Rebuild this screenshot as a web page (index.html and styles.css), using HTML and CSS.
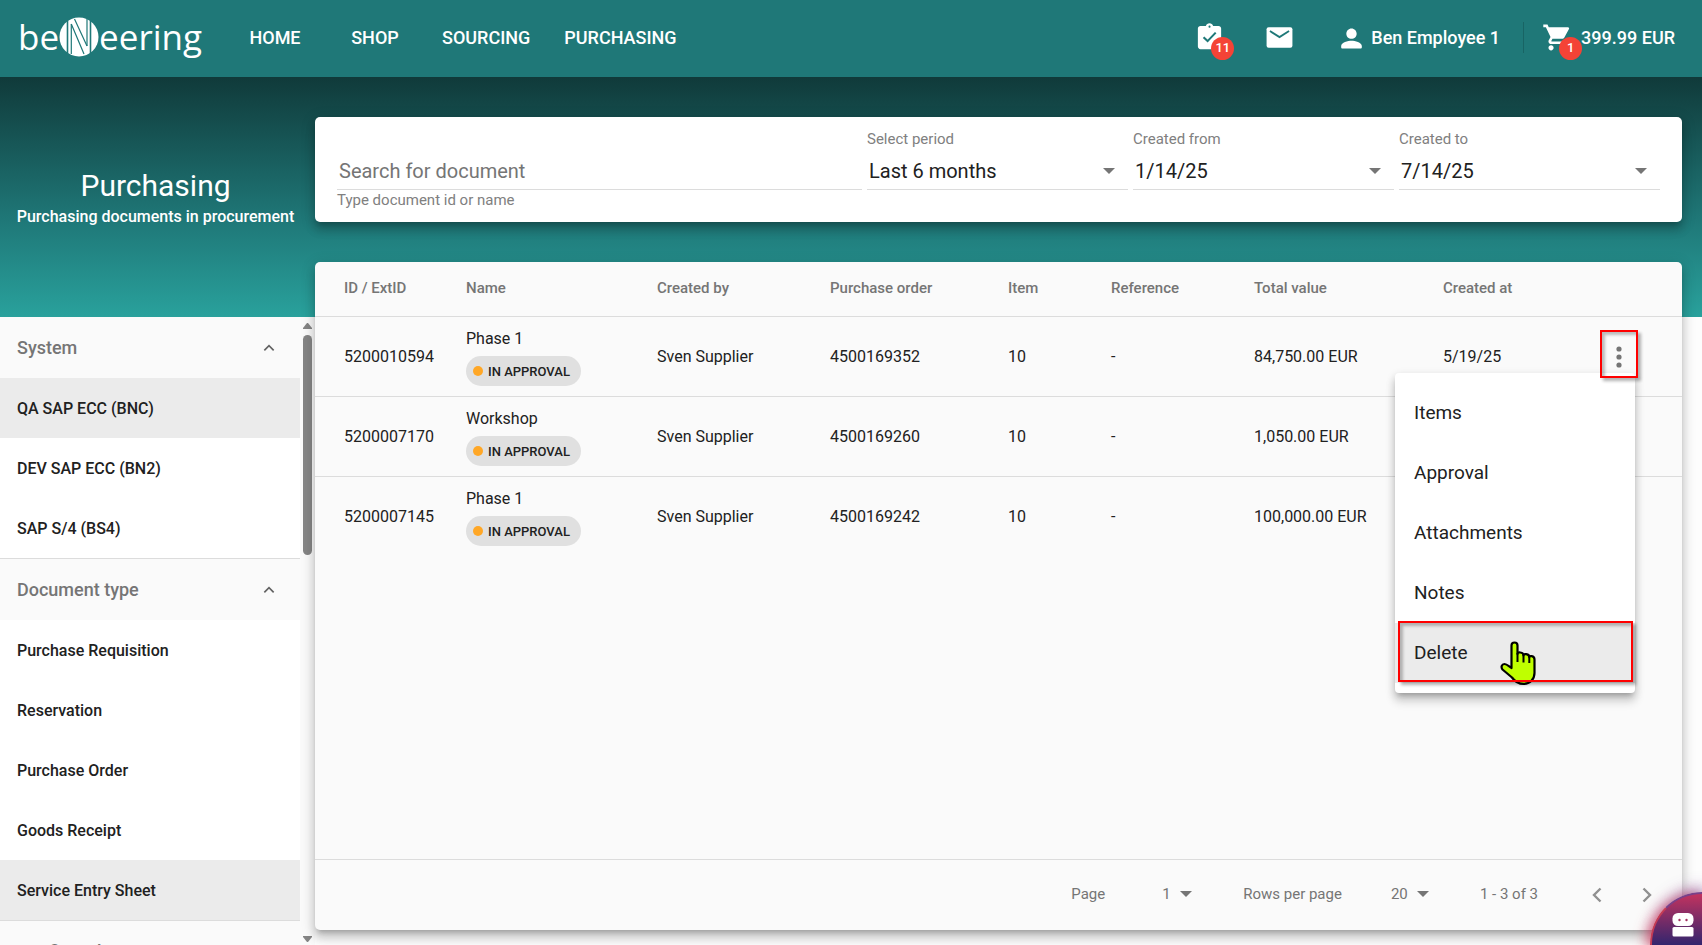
FILE: index.html
```
<!DOCTYPE html>
<html lang="en">
  <head>
    <meta charset="UTF-8" />
    <meta name="viewport" content="width=device-width, initial-scale=1" />
    <title>Purchasing</title>
    <link rel="stylesheet" href="styles.css">
  </head>
  <body>
    <header class="topbar">
      <a class="logo" href="#" aria-label="beNeering">
        <span>be</span>
        <svg class="logo-mark" viewBox="0 0 40 40">
          <circle cx="20" cy="20" r="19.5" fill="#fff" />
          <path d="M8.500 3v34M31.500 3v34" fill="none" stroke="#1f7878" stroke-width="1.600" />
          <path d="M12.300 7v30M28 2v27" fill="none" stroke="#1f7878" stroke-width="1.200" />
          <path d="M12.300 7L25 37M15.500 2L28 29" fill="none" stroke="#1f7878" stroke-width="1.200" />
        </svg>
        <span>eering</span>
      </a>
      <nav class="main-nav">
        <a href="#">HOME</a>
        <a href="#">SHOP</a>
        <a href="#">SOURCING</a>
        <a href="#">PURCHASING</a>
      </nav>
      <div class="top-actions">
        <button type="button" class="icon-btn" aria-label="Tasks">
          <svg class="icon" viewBox="0 0 24 24">
            <path fill="#fff" fill-rule="evenodd" d="M19 3h-4.180C14.400 1.840 13.300 1 12 1s-2.400.84-2.820 2H5c-1.100 0-2 .9-2 2v14c0 1.100.9 2 2 2h14c1.100 0 2-.9 2-2V5c0-1.100-.9-2-2-2zm-7-.2c.5 0 .8.3.8.8s-.3.8-.8.8-.8-.3-.8-.8.3-.8.8-.8z" />
            <path d="M7.400 11.800l3.100 3L16.800 8.200" fill="none" stroke="#1f7878" stroke-width="1.600" />
          </svg>
          <span class="badge">11</span>
        </button>
        <button type="button" class="icon-btn mail" aria-label="Messages">
          <svg class="icon" viewBox="0 0 24 24">
            <rect x="2" y="4" width="20" height="16" rx="1.600" fill="#fff" />
            <path d="M4.600 7l7.400 4.700L19.400 7" fill="none" stroke="#1f7878" stroke-width="1.400" />
          </svg>
        </button>
        <button type="button" class="user-btn">
          <svg class="icon" viewBox="0 0 24 24">
            <path fill="#fff" d="M12 13c2.200 0 4-1.800 4-4s-1.800-4-4-4-4 1.800-4 4 1.800 4 4 4zm0 1.500c-2.700 0-8 1.300-8 4v1c0 .6.4 1 1 1h14c.6 0 1-.4 1-1v-1c0-2.700-5.300-4-8-4z" />
          </svg>
          <span>Ben Employee 1</span>
        </button>
        <button type="button" class="cart-btn">
          <span class="icon-btn">
            <svg class="icon" viewBox="0 0 24 24">
              <path fill="#fff" d="M7 18c-1.100 0-1.990.9-1.990 2S5.900 22 7 22s2-.9 2-2-.9-2-2-2zM1 2v2h2l3.600 7.590-1.350 2.450c-.16.28-.25.61-.25.96 0 1.100.9 2 2 2h12v-2H7.420c-.14 0-.25-.11-.25-.25l.03-.12.900-1.630h7.450c.75 0 1.410-.41 1.750-1.030l3.580-6.490A1 1 0 0 0 20 4H5.210l-.94-2H1zm16 16c-1.100 0-1.990.9-1.990 2s.890 2 1.990 2 2-.9 2-2-.9-2-2-2z" />
            </svg>
            <span class="badge">1</span>
          </span>
          <span>399.99 EUR</span>
        </button>
      </div>
    </header>

    <div class="page">
      <aside class="sidebar">
        <div class="page-title">
          <h1>Purchasing</h1>
          <p>Purchasing documents in procurement</p>
        </div>
        <div class="side-scroll">
          <div class="side-list">
            <button type="button" class="group-head">
              System
              <svg viewBox="0 0 12 12"><path d="M2 8l4-4 4 4" /></svg>
            </button>
            <ul class="group">
              <li><a class="selected" href="#">QA SAP ECC (BNC)</a></li>
              <li><a href="#">DEV SAP ECC (BN2)</a></li>
              <li><a href="#">SAP S/4 (BS4)</a></li>
            </ul>
            <button type="button" class="group-head">
              Document type
              <svg viewBox="0 0 12 12"><path d="M2 8l4-4 4 4" /></svg>
            </button>
            <ul class="group">
              <li><a href="#">Purchase Requisition</a></li>
              <li><a href="#">Reservation</a></li>
              <li><a href="#">Purchase Order</a></li>
              <li><a href="#">Goods Receipt</a></li>
              <li><a class="selected" href="#">Service Entry Sheet</a></li>
            </ul>
            <button type="button" class="group-head">
              Confirmed
              <svg viewBox="0 0 12 12"><path d="M2 8l4-4 4 4" /></svg>
            </button>
          </div>
          <div class="scrollbar">
            <svg viewBox="0 0 9 8"><path d="M4 1h1l4 5v1H0V6z" /></svg>
            <div class="track"><div class="thumb"></div></div>
            <svg viewBox="0 0 9 8"><path d="M4 7h1l4-5V1H0v1z" /></svg>
          </div>
        </div>
      </aside>

      <main class="content">
        <form class="card filters">
          <div class="field">
            <input type="text" id="search" placeholder="Search for document" />
            <label class="hint" for="search">Type document id or name</label>
          </div>
          <div class="field">
            <label for="period">Select period</label>
            <div class="control">
              <select id="period"><option>Last 6 months</option></select>
              <svg class="caret" viewBox="0 0 10 5"><path d="M0 0h10L5 5z" /></svg>
            </div>
          </div>
          <div class="field">
            <label for="from">Created from</label>
            <div class="control">
              <input type="text" id="from" value="1/14/25" />
              <svg class="caret" viewBox="0 0 10 5"><path d="M0 0h10L5 5z" /></svg>
            </div>
          </div>
          <div class="field">
            <label for="to">Created to</label>
            <div class="control">
              <input type="text" id="to" value="7/14/25" />
              <svg class="caret" viewBox="0 0 10 5"><path d="M0 0h10L5 5z" /></svg>
            </div>
          </div>
        </form>

        <section class="card results">
          <table>
            <colgroup>
              <col class="c-id" /><col class="c-name" /><col class="c-by" /><col class="c-po" /><col class="c-item" />
              <col class="c-ref" /><col class="c-total" /><col class="c-at" /><col class="c-menu" />
            </colgroup>
            <thead>
              <tr>
                <th>ID / ExtID</th>
                <th>Name</th>
                <th>Created by</th>
                <th>Purchase order</th>
                <th>Item</th>
                <th>Reference</th>
                <th>Total value</th>
                <th>Created at</th>
                <th></th>
              </tr>
            </thead>
            <tbody>
              <tr>
                <td>5200010594</td>
                <td class="name">Phase 1<span class="chip">IN APPROVAL</span></td>
                <td>Sven Supplier</td>
                <td>4500169352</td>
                <td>10</td>
                <td>-</td>
                <td>84,750.00 EUR</td>
                <td>5/19/25</td>
                <td class="actions">
                  <div class="menu">
                    <button type="button">Items</button>
                    <button type="button">Approval</button>
                    <button type="button">Attachments</button>
                    <button type="button">Notes</button>
                    <button type="button" class="active">
                      Delete
                      <svg class="pointer" viewBox="0 0 36 46">
                        <path fill="#bfff00" stroke="#000" stroke-width="2.200" stroke-linejoin="round" d="M11.500 26V5.500a3 3 0 0 1 6 0v8.500q0-2 3-1.500 3 .3 3 3 0-1.800 2.800-1.300 3 .5 3 3 0-1.500 2.400-1.100 2.800.5 2.800 3.500V33c0 6-4.500 11-11 11-6 0-9-3-11.500-6.500L2.500 29.500c-1.800-2.300-.8-5.500 2-5.500 2.500 0 5 3 7 4z" />
                        <path fill="none" stroke="#000" stroke-width="2" d="M17.500 13v9M23.500 15v7.500M29.300 16v7" />
                      </svg>
                      <span class="marker"></span>
                    </button>
                  </div>
                  <button type="button" class="kebab" aria-label="Actions">
                    <svg viewBox="0 0 6 22"><circle cx="3" cy="3" r="2.600" /><circle cx="3" cy="11" r="2.600" /><circle cx="3" cy="19" r="2.600" /></svg>
                  </button>
                </td>
              </tr>
              <tr>
                <td>5200007170</td>
                <td class="name">Workshop<span class="chip">IN APPROVAL</span></td>
                <td>Sven Supplier</td>
                <td>4500169260</td>
                <td>10</td>
                <td>-</td>
                <td>1,050.00 EUR</td>
                <td></td>
                <td></td>
              </tr>
              <tr>
                <td>5200007145</td>
                <td class="name">Phase 1<span class="chip">IN APPROVAL</span></td>
                <td>Sven Supplier</td>
                <td>4500169242</td>
                <td>10</td>
                <td>-</td>
                <td>100,000.00 EUR</td>
                <td></td>
                <td></td>
              </tr>
            </tbody>
          </table>
          <footer class="pager">
            <label for="page">Page</label>
            <div class="pick">
              <select id="page"><option>1</option></select>
              <svg class="caret" viewBox="0 0 10 5"><path d="M0 0h10L5 5z" /></svg>
            </div>
            <label for="rows">Rows per page</label>
            <div class="pick">
              <select id="rows"><option>20</option></select>
              <svg class="caret" viewBox="0 0 10 5"><path d="M0 0h10L5 5z" /></svg>
            </div>
            <span class="range">1 - 3 of 3</span>
            <button type="button" class="step" aria-label="Previous page">
              <svg viewBox="0 0 10 16"><path d="M8.500 1.500L2 8l6.500 6.500" /></svg>
            </button>
            <button type="button" class="step" aria-label="Next page">
              <svg viewBox="0 0 10 16"><path d="M1.500 1.500L8 8l-6.500 6.500" /></svg>
            </button>
          </footer>
        </section>
      </main>
    </div>

    <button type="button" class="bot" aria-label="Assistant">
      <svg viewBox="0 0 22 24">
        <rect x="0.500" y="0" width="21" height="13" rx="5.500" fill="#fff" />
        <rect x="0.500" y="14" width="21" height="9.500" rx="1.500" fill="#fff" />
        <circle cx="7.500" cy="7" r="1.200" fill="#a3305f" />
        <circle cx="14.500" cy="7" r="1.200" fill="#a3305f" />
      </svg>
    </button>
  </body>
</html>
```
FILE: styles.css
```
* {
  box-sizing: border-box;
}
body {
  margin: 0;
  height: 100vh;
  display: flex;
  flex-direction: column;
  overflow: hidden;
  background-color: #fdfdfd;
  font-family: Roboto, sans-serif;
  font-size: 16px;
  color: #212121;
}
button,
input,
select {
  font: inherit;
  color: inherit;
  background: none;
  border: none;
  border-radius: 0;
  padding: 0;
  margin: 0;
  outline: none;
  appearance: none;
}
button {
  cursor: pointer;
}
a {
  color: inherit;
  text-decoration: none;
}

/* top bar */
.topbar {
  flex: none;
  height: 77px;
  display: flex;
  align-items: center;
  padding: 0 27px 2px 18px;
  background-color: #1f7878;
  color: white;
  font-size: 18px;
  font-weight: 500;
}
.logo {
  display: flex;
  align-items: center;
  width: 207px;
  font-family: "Open Sans", sans-serif;
  font-size: 35px;
  font-weight: 400;
  line-height: 42px;
  padding-bottom: 2px;
}
.logo-mark {
  flex: none;
  width: 40px;
  height: 40px;
}
.main-nav {
  display: flex;
  flex: 1;
}
.main-nav a {
  min-width: 100px;
  padding: 0 17px;
  text-align: center;
}
.top-actions {
  display: flex;
  align-items: center;
}
.icon {
  display: block;
  width: 31px;
  height: 31px;
}
.icon-btn {
  position: relative;
}
.mail {
  margin: 0 41px 0 39px;
}
.badge {
  position: absolute;
  left: 17px;
  top: 15px;
  min-width: 23px;
  height: 23px;
  border-radius: 12px;
  background-color: #f44336;
  font-size: 13px;
  line-height: 22px;
  text-align: center;
}
.user-btn {
  display: flex;
  align-items: center;
  gap: 4px;
  padding-right: 23px;
}
.cart-btn {
  display: flex;
  align-items: center;
  gap: 8px;
  height: 31px;
  padding-left: 18px;
  border-left: 1px solid #186464;
}

/* page grid */
.page {
  flex: 1;
  min-height: 0;
  display: flex;
  background-image: linear-gradient(#103a3a, #1f7878 60%, #29a19c);
  background-size: 100% 240px;
  background-repeat: no-repeat;
}
.sidebar {
  flex: none;
  width: 315px;
  display: flex;
  flex-direction: column;
}
.page-title {
  flex: none;
  height: 240px;
  padding: 2px 4px 0 0;
  display: flex;
  flex-direction: column;
  justify-content: center;
  align-items: center;
  color: white;
}
.page-title h1 {
  margin: 0;
  font-size: 30px;
  font-weight: 400;
  line-height: 38px;
}
.page-title p {
  margin: 0;
  font-weight: 500;
  line-height: 24px;
}
.side-scroll {
  flex: 1;
  min-height: 0;
  display: flex;
  background-color: #fafafa;
}
.side-list {
  flex: 1;
  overflow: hidden;
}
.group-head {
  width: 100%;
  height: 61px;
  padding: 0 24px 0 17px;
  display: flex;
  justify-content: space-between;
  align-items: center;
  font-size: 18px;
  font-weight: 500;
  color: #757575;
}
.group-head svg {
  width: 14px;
  height: 14px;
  fill: none;
  stroke: #616161;
  stroke-width: 1.4;
}
.group {
  list-style: none;
  margin: 0;
  padding: 0;
  background-color: white;
  border-bottom: 1px solid #dcdcdc;
}
.group a {
  display: block;
  padding: 2px 0 0 17px;
  line-height: 58px;
  font-weight: 500;
}
.group .selected {
  background-color: #ebebeb;
}
.scrollbar {
  width: 15px;
  padding: 5px 3px 2px;
  display: flex;
  flex-direction: column;
  gap: 5px;
}
.scrollbar svg {
  width: 9px;
  height: 8px;
  fill: #858585;
}
.track {
  flex: 1;
}
.thumb {
  width: 9px;
  height: 37%;
  border-radius: 5px;
  background-color: #858585;
}

/* cards */
.content {
  flex: 1;
  min-width: 0;
  display: flex;
  flex-direction: column;
  gap: 40px;
  padding: 40px 20px 15px 0;
}
.card {
  border-radius: 5px;
  box-shadow: 0 5px 5px -3px rgba(0, 0, 0, 0.2), 0 8px 10px 1px rgba(0, 0, 0, 0.14), 0 3px 14px 2px rgba(0, 0, 0, 0.12);
}
.filters {
  flex: none;
  display: grid;
  grid-template-columns: 1fr repeat(3, 261px);
  align-items: end;
  gap: 5px;
  height: 105px;
  padding: 0 22px 32px;
  background-color: white;
}
.field {
  position: relative;
  min-width: 0;
  display: flex;
  flex-direction: column;
}
.field label {
  font-size: 15px;
  line-height: 20px;
  color: #808080;
}
.field input,
.field select {
  width: 100%;
  height: 41px;
  padding: 4px 2px 0;
  border-bottom: 1px solid #dcdcdc;
  font-size: 20px;
}
.field input::placeholder {
  color: #757575;
  opacity: 1;
}
.field .hint {
  position: absolute;
  top: 100%;
  left: 0;
}
.control {
  position: relative;
}
.caret {
  width: 12px;
  height: 6px;
  fill: #757575;
}
.control .caret {
  position: absolute;
  right: 13px;
  top: 19px;
}

/* results table */
.results {
  flex: 1;
  display: flex;
  flex-direction: column;
  justify-content: space-between;
  background-color: #fafafa;
}
table {
  width: 100%;
  table-layout: fixed;
  border-collapse: collapse;
}
.c-id { width: 136px; }
.c-name { width: 191px; }
.c-by { width: 173px; }
.c-po { width: 178px; }
.c-item { width: 103px; }
.c-ref { width: 143px; }
.c-total { width: 189px; }
.c-at { width: 162px; }
.c-menu { width: 92px; }
th,
td {
  padding: 0 0 0 15px;
  text-align: left;
  white-space: nowrap;
}
th:first-child,
td:first-child {
  padding-left: 29px;
}
th {
  height: 54px;
  padding-bottom: 1px;
  font-size: 15px;
  font-weight: 500;
  color: #757575;
}
td {
  height: 80px;
}
tr {
  border-bottom: 1px solid #dcdcdc;
}
tbody tr:last-child {
  border-bottom: none;
}
.name {
  padding-top: 3px;
}
.chip {
  display: flex;
  align-items: center;
  gap: 5px;
  width: 115px;
  height: 30px;
  margin-top: 8px;
  padding: 0 7px;
  border-radius: 15px;
  background-color: #e0e0e0;
  font-size: 13px;
  font-weight: 500;
}
.chip::before {
  content: "";
  width: 10px;
  height: 10px;
  border-radius: 50%;
  background-color: #ffa726;
}
.actions {
  position: relative;
}
.kebab {
  position: absolute;
  top: 13px;
  right: 44px;
  width: 38px;
  height: 48px;
  border: 2px solid #f00;
  box-shadow: 3px 3px 3px rgba(0, 0, 0, 0.3), inset 3px 3px 3px rgba(0, 0, 0, 0.25);
}
.kebab svg {
  display: block;
  width: 6px;
  height: 22px;
  margin: 6px auto 0;
  fill: #757575;
}
.menu {
  position: absolute;
  top: 56px;
  right: 47px;
  width: 240px;
  padding: 10px 0;
  border-radius: 4px;
  background-color: white;
  box-shadow: 0 5px 5px -3px rgba(0, 0, 0, 0.2), 0 8px 10px 1px rgba(0, 0, 0, 0.14), 0 3px 8px 1px rgba(0, 0, 0, 0.12);
}
.menu button {
  position: relative;
  display: block;
  width: 100%;
  height: 60px;
  padding-left: 19px;
  font-size: 19px;
  text-align: left;
}
.menu .active {
  background-color: #ebebeb;
}
.marker {
  position: absolute;
  inset: -2px 2px 1px 3px;
  border: 2px solid #f00;
  box-shadow: 3px 3px 3px rgba(0, 0, 0, 0.3), inset 3px 3px 3px rgba(0, 0, 0, 0.25);
}
.pointer {
  position: absolute;
  left: 105px;
  top: 17px;
  width: 36px;
  height: 46px;
}

/* pager */
.pager {
  height: 71px;
  padding: 0 10px 2px;
  display: flex;
  justify-content: flex-end;
  align-items: center;
  border-top: 1px solid #dcdcdc;
  font-size: 15px;
  color: #757575;
}
.pick {
  display: flex;
  align-items: center;
  justify-content: flex-end;
  gap: 9px;
  width: 87px;
}
.pager label + .pick {
  margin-right: 51px;
}
.range {
  margin-right: 34px;
}
.step {
  width: 50px;
  height: 50px;
}
.step svg {
  width: 10px;
  height: 16px;
  vertical-align: middle;
  fill: none;
  stroke: #909090;
  stroke-width: 2.4;
}

/* chat bot */
.bot {
  position: fixed;
  right: 0;
  bottom: 0;
  width: 52px;
  height: 53px;
  padding: 19px 0 0 20px;
  display: flex;
  align-items: flex-start;
  border-top: 2px solid #7a4088;
  border-left: 2px solid #c43c55;
  border-radius: 52px 0 0 0;
  background-image: linear-gradient(#c2335f, #33256e);
  box-shadow: -4px 3px 14px rgba(220, 50, 80, 0.7), 3px -3px 16px rgba(110, 60, 140, 0.7);
}
.bot svg {
  flex: none;
  width: 22px;
  height: 24px;
}
```
